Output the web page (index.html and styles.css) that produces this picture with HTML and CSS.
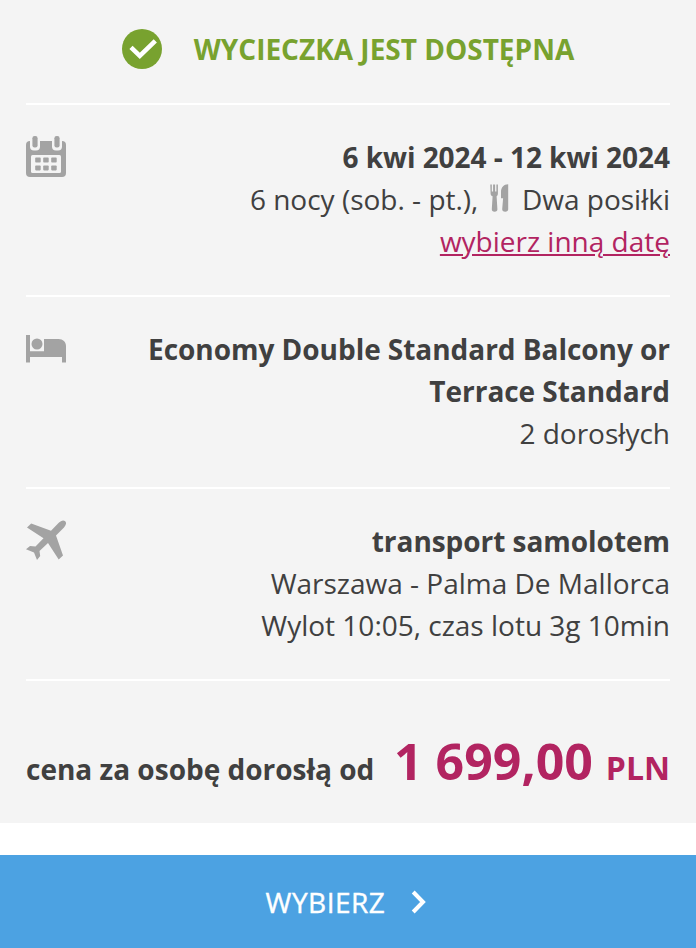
FILE: index.html
```html
<!DOCTYPE html>
<html lang="pl">
<head>
  <meta charset="UTF-8">
  <title>Wycieczka</title>
  <link rel="stylesheet" href="styles.css">
</head>
<body>
  <div class="offer">
    <div class="status">
      <svg class="status-icon" viewBox="0 0 40 40">
        <circle cx="20" cy="20" r="20" fill="#78a22f"/>
        <path d="M9 18.300 L17.800 26.800 L33.300 11.800" fill="none" stroke="#fff" stroke-width="4.600"/>
      </svg>
      <span>WYCIECZKA JEST DOSTĘPNA</span>
    </div>

    <div class="row">
      <svg class="icon" viewBox="0 0 40 42">
        <rect x="0" y="5" width="40" height="36" rx="4"/>
        <rect class="cut" x="4" y="1" width="10" height="13.500" rx="4"/>
        <rect class="cut" x="26" y="1" width="10" height="13.500" rx="4"/>
        <rect x="6.400" y="0" width="5.200" height="11.500" rx="2.200"/>
        <rect x="28.400" y="0" width="5.200" height="11.500" rx="2.200"/>
        <rect class="cut" x="5" y="19" width="30" height="18" rx="1.500"/>
        <rect x="9.200" y="21.600" width="5.500" height="5" rx=".8"/>
        <rect x="17.200" y="21.600" width="5.500" height="5" rx=".8"/>
        <rect x="25.200" y="21.600" width="5.500" height="5" rx=".8"/>
        <rect x="9.200" y="29.400" width="5.500" height="5" rx=".8"/>
        <rect x="17.200" y="29.400" width="5.500" height="5" rx=".8"/>
        <rect x="25.200" y="29.400" width="5.500" height="5" rx=".8"/>
      </svg>
      <div class="info">
        <strong>6 kwi 2024 - 12 kwi 2024</strong><br>
        6 nocy (sob. - pt.),
        <svg class="meal" viewBox="0 0 19 28">
          <path d="M.3 .5h1.500v7h1.300v-7h2v7h1.300v-7h1.500v9c0 1.500-.6 2.400-1.300 2.800l.8 13c.1 1.600-.9 2.500-2.800 2.500s-2.900-.9-2.800-2.500l.8-13c-1.300-.4-2-1.300-2-2.800z"/>
          <path d="M18.200 .2v25.100c0 1.600-1.100 2.500-3 2.500s-3.100-.9-3-2.500l.9-11h-2.100v-6.500c0-4.200 2.700-7.600 7.200-7.600z"/>
        </svg>
        Dwa posiłki<br>
        <a class="link" href="#">wybierz inną datę</a>
      </div>
    </div>

    <div class="row">
      <svg class="icon bed" viewBox="0 0 40 28">
        <path d="M0 0h4v16.300h14v-12.300h14.500c4.500 0 7.500 3 7.500 7v16.500h-4v-5.500h-32v5.500h-4z"/>
        <circle cx="11" cy="9" r="5.500"/>
      </svg>
      <div class="info">
        <strong>Economy Double Standard Balcony or Terrace Standard</strong><br>
        2 dorosłych
      </div>
    </div>

    <div class="row">
      <svg class="icon plane" viewBox="0 0 40 40">
        <path d="M1 7.500L5.200 3.500L25 10.800L32.500 3C35 .4 37.500-.2 39.200 1.200C40.800 2.800 40 5.300 38 7.500L30 15.500L37 35.500L32.700 39.500L22 23L13.500 31L14.200 36L11 40L8 32.500L0 29.300L4 26L9.500 26.500L17.500 18.300Z"/>
      </svg>
      <div class="info">
        <strong>transport samolotem</strong><br>
        Warszawa - Palma De Mallorca<br>
        Wylot 10:05, czas lotu 3g 10min
      </div>
    </div>

    <div class="price">
      <strong>cena za osobę dorosłą od</strong>
      <span class="amount">1 699,00 <span class="currency">PLN</span></span>
    </div>
  </div>

  <a class="select" href="#">
    WYBIERZ
    <svg class="arrow" viewBox="0 0 16 24">
      <path d="M2.200 2L12 12L2.200 22" fill="none" stroke="#fff" stroke-width="4"/>
    </svg>
  </a>
</body>
</html>
```
FILE: styles.css
```css
* {
  box-sizing: border-box;
}
body {
  margin: 0;
  background: #fff;
  color: #404040;
  font-family: "Open Sans", "Noto Sans", sans-serif;
  font-size: 28px;
  line-height: 42px;
}
strong {
  font-weight: 700;
}
.offer {
  height: 823px;
  padding: 0 26px;
  background: #f4f4f4;
}
.status {
  display: flex;
  justify-content: center;
  height: 103px;
  padding-top: 28px;
  gap: 32px;
  color: #78a22f;
  font-weight: 700;
}
.status-icon {
  width: 40px;
  height: 40px;
  margin-top: 1px;
}
.row {
  display: flex;
  justify-content: space-between;
  height: 192px;
  padding-top: 31px;
  border-top: 2px solid #fff;
}
.icon {
  flex: none;
  width: 40px;
  height: 42px;
  fill: #a3a3a3;
}
.icon .cut {
  fill: #f4f4f4;
}
.bed {
  height: 28px;
  margin-top: 7px;
}
.plane {
  height: 40px;
}
.info {
  width: 540px;
  text-align: right;
}
.info strong {
  letter-spacing: -0.04px;
}
.meal {
  width: 19px;
  height: 28px;
  margin: 0 6px 0 4px;
  vertical-align: -2px;
  fill: #a3a3a3;
}
.link {
  color: #b22461;
}
.price {
  display: flex;
  justify-content: space-between;
  align-items: baseline;
  height: 142px;
  padding-top: 59px;
  border-top: 2px solid #fff;
}
.amount {
  color: #b22461;
  font-size: 50px;
  font-weight: 700;
}
.currency {
  font-size: 32px;
}
.select {
  display: flex;
  justify-content: center;
  align-items: center;
  height: 93px;
  margin-top: 32px;
  padding-right: 3px;
  gap: 26px;
  background: #4ca2e2;
  color: #fff;
  letter-spacing: 0.5px;
  -webkit-text-stroke: 0.4px #fff;
  text-decoration: none;
}
.arrow {
  width: 16px;
  height: 24px;
}
```
